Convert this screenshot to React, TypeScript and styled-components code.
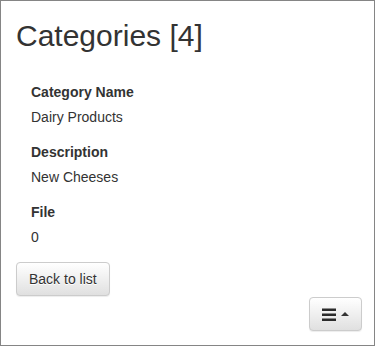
import React from "react";
import styled, { createGlobalStyle } from "styled-components";

const GlobalStyle = createGlobalStyle`
  html, body { margin: 0; padding: 0; background: #fff; }
  body {
    font-family: "Liberation Sans", Arial, Helvetica, sans-serif;
    font-size: 14px;
    line-height: 20px;
    color: #333;
  }
  * { box-sizing: border-box; }
`;

const Frame = styled.div`
  width: 375px;
  min-height: 346px;
  border: 1px solid #858585;
  padding: 0 12px 14px 15px;
  display: flex;
  flex-direction: column;
`;

const Title = styled.h2`
  margin: 18px 0 30px;
  font-size: 30px;
  font-weight: 500;
  line-height: 33px;
  color: #333;
`;

const Details = styled.dl`
  margin: 0;
  padding-left: 15px;
`;

const Term = styled.dt`
  font-weight: 700;
  margin: 0 0 5px;
`;

const Value = styled.dd`
  margin: 0 0 15px;
`;

const Button = styled.button`
  display: inline-flex;
  align-items: center;
  justify-content: center;
  gap: 5px;
  height: 34px;
  padding: 6px 12px;
  font-family: inherit;
  font-size: 14px;
  line-height: 20px;
  color: #333;
  text-shadow: 0 1px 0 #fff;
  background-image: linear-gradient(to bottom, #fff 0, #e0e0e0 100%);
  border: 1px solid #ccc;
  border-radius: 4px;
  box-shadow: inset 0 1px 0 rgba(255, 255, 255, 0.15), 0 1px 1px rgba(0, 0, 0, 0.075);
  cursor: pointer;
`;

const BackRow = styled.div`
  display: flex;
`;

const Footer = styled.div`
  margin-top: auto;
  display: flex;
  justify-content: flex-end;
`;

const Caret = styled.span`
  display: inline-block;
  width: 0;
  height: 0;
  border-left: 4px solid transparent;
  border-right: 4px solid transparent;
  border-bottom: 4px solid #333;
`;

const MenuIcon = () => (
  <svg width="14" height="13" viewBox="0 0 14 13" aria-hidden="true">
    <rect x="0" y="0.5" width="14" height="2.5" fill="#2b2b2b" />
    <rect x="0" y="5.5" width="14" height="2.5" fill="#2b2b2b" />
    <rect x="0" y="10.5" width="14" height="2.5" fill="#2b2b2b" />
  </svg>
);

const fields = [
  { label: "Category Name", value: "Dairy Products" },
  { label: "Description", value: "New Cheeses" },
  { label: "File", value: "0" },
];

export default function App() {
  return (
    <>
      <GlobalStyle />
      <Frame>
        <Title>Categories [4]</Title>
        <Details>
          {fields.map((f) => (
            <React.Fragment key={f.label}>
              <Term>{f.label}</Term>
              <Value>{f.value}</Value>
            </React.Fragment>
          ))}
        </Details>
        <BackRow>
          <Button>Back to list</Button>
        </BackRow>
        <Footer>
          <Button aria-label="Menu">
            <MenuIcon />
            <Caret />
          </Button>
        </Footer>
      </Frame>
    </>
  );
}
